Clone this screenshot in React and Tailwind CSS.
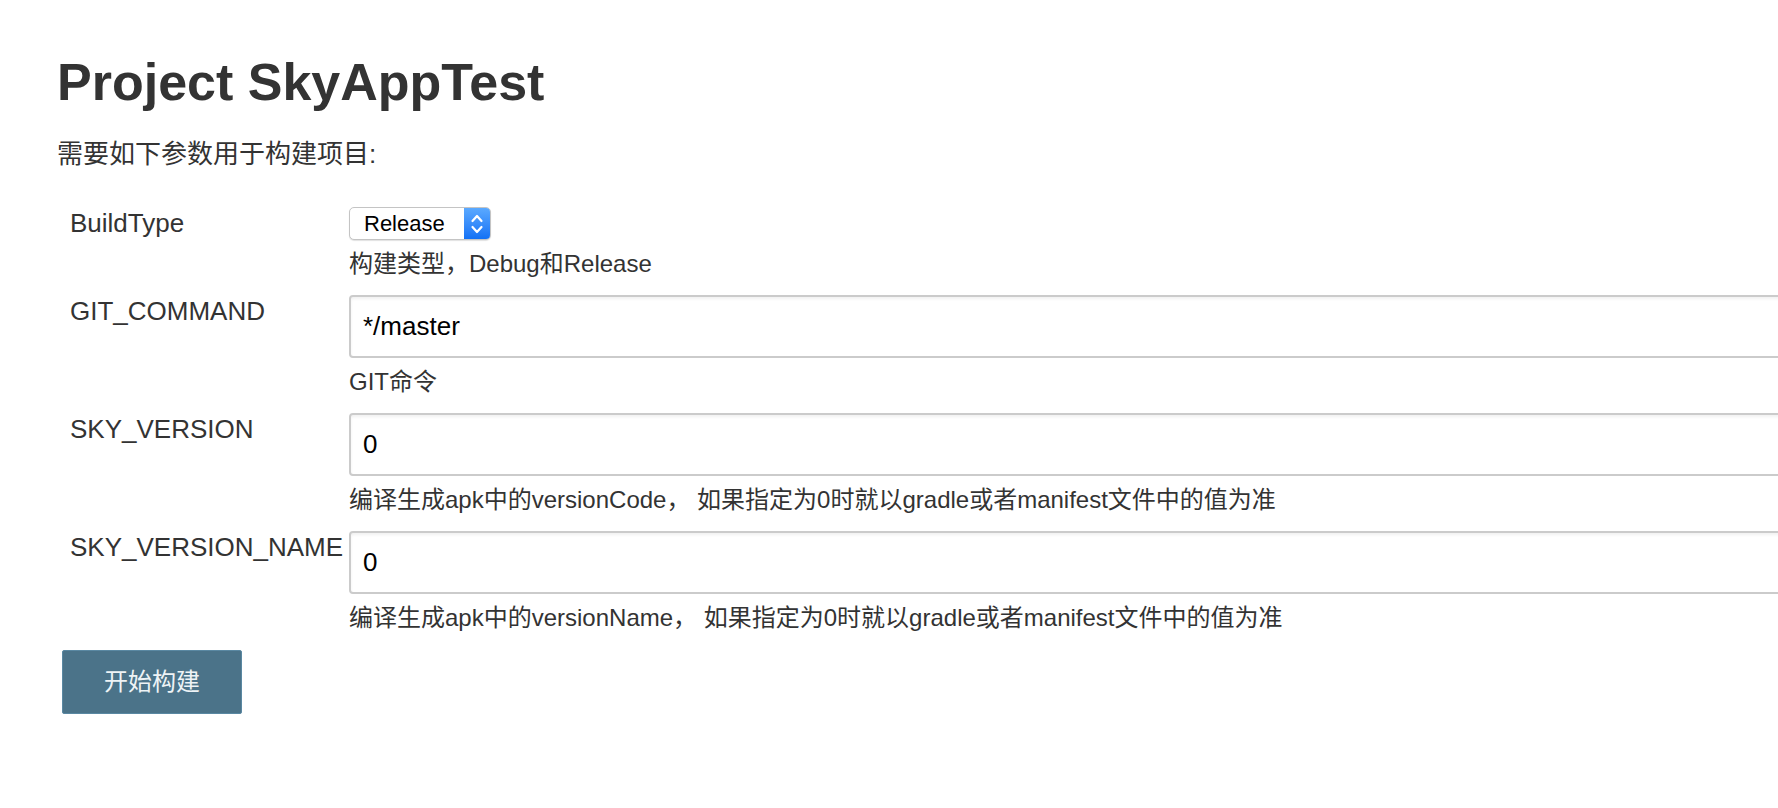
import { useState } from 'react';

const FONT = { fontFamily: '"Liberation Sans", "Noto Sans CJK SC", sans-serif' };

// Mac-style select box with blue stepper arrows
const MacSelect = ({ value }) => (
  <div className="flex h-[33px] w-[142px] overflow-hidden rounded-[5px] border border-[#c4c4c4] bg-white shadow-[0_1px_1px_rgba(0,0,0,0.12)]">
    <div className="flex flex-1 items-center pl-[14px] text-[22px] leading-none text-black">{value}</div>
    <div className="flex w-[26px] items-center justify-center bg-gradient-to-b from-[#5aa9ff] to-[#1271f5]">
      <svg width="14" height="26" viewBox="0 0 14 26" fill="none" stroke="white" strokeWidth="2.2" strokeLinecap="round" strokeLinejoin="round">
        <path d="M2.5 10 L7 5 L11.5 10" />
        <path d="M2.5 16 L7 21 L11.5 16" />
      </svg>
    </div>
  </div>
);

const TextField = ({ value }) => (
  <input
    readOnly
    value={value}
    className="block h-[63px] w-[1500px] rounded-[4px] border-2 border-[#cbcbcb] bg-white pl-[12px] text-[26px] text-black shadow-[inset_0_2px_3px_rgba(0,0,0,0.06)] outline-none"
  />
);

const Row = ({ label, children, desc }) => (
  <div className="flex">
    <div className="w-[292px] shrink-0 pl-[13px] pt-[1px] text-[26px] leading-[30px] text-[#333]">{label}</div>
    <div className="flex-1">
      {children}
      <div className="mt-[10px] text-[24px] leading-[28px] text-[#333]">{desc}</div>
    </div>
  </div>
);

export default function App() {
  const [params] = useState([
    { name: 'GIT_COMMAND', value: '*/master', desc: 'GIT命令' },
    { name: 'SKY_VERSION', value: '0', desc: '编译生成apk中的versionCode， 如果指定为0时就以gradle或者manifest文件中的值为准' },
    { name: 'SKY_VERSION_NAME', value: '0', desc: '编译生成apk中的versionName， 如果指定为0时就以gradle或者manifest文件中的值为准' },
  ]);

  return (
    <div className="min-h-screen w-full overflow-hidden bg-white" style={FONT}>
      <div className="pl-[57px] pt-[51px]">
        <h1 className="text-[52px] font-bold leading-[62px] text-[#333]">Project SkyAppTest</h1>
        <p className="mt-[25px] text-[26px] leading-[32px] text-[#333]">需要如下参数用于构建项目:</p>

        <div className="mt-[37px] flex flex-col gap-[17px]">
          <Row label="BuildType" desc="构建类型，Debug和Release">
            <MacSelect value="Release" />
          </Row>
          {params.map((p) => (
            <Row key={p.name} label={p.name} desc={p.desc}>
              <TextField value={p.value} />
            </Row>
          ))}
        </div>

        <button className="ml-[5px] mt-[18px] h-[64px] w-[180px] rounded-[2px] border border-[#5a88a2] bg-[#4b7389] text-[24px] text-[#eef3f6]">
          开始构建
        </button>
      </div>
    </div>
  );
}
